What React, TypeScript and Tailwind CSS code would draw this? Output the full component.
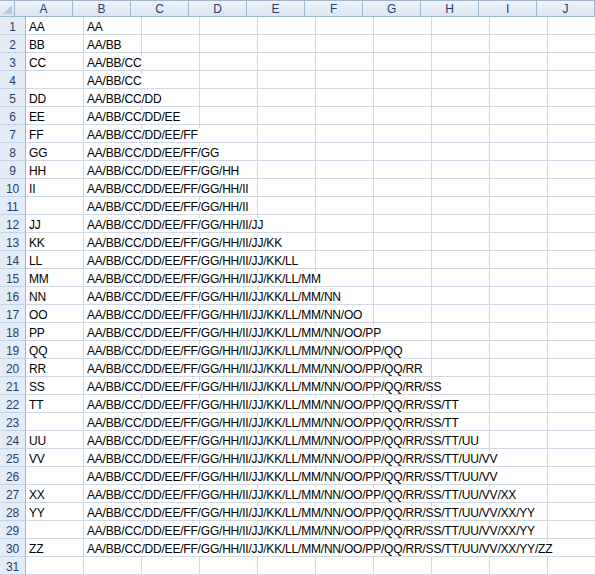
import React from "react";

const COLUMNS = ["A", "B", "C", "D", "E", "F", "G", "H", "I", "J"];

const COL_A = [
  "AA", "BB", "CC", "", "DD", "EE", "FF", "GG", "HH", "II",
  "", "JJ", "KK", "LL", "MM", "NN", "OO", "PP", "QQ", "RR",
  "SS", "TT", "", "UU", "VV", "", "XX", "YY", "", "ZZ",
];

// column B holds the running path of every code seen so far in column A
function buildRows() {
  const seen: string[] = [];
  const rows = COL_A.map((code) => {
    if (code) seen.push(code);
    return { a: code, b: seen.join("/") };
  });
  rows.push({ a: "", b: "" });
  return rows;
}

function CornerCell() {
  return (
    <div className="w-[26px] h-full border-r border-[#9eb6ce] flex items-end justify-end pr-[2px] pb-[2px]">
      <svg width="9" height="9" viewBox="0 0 9 9">
        <polygon points="9,0 9,9 0,9" fill="#b7c8dd" />
      </svg>
    </div>
  );
}

function Cell({ children, wide }: { children?: React.ReactNode; wide?: boolean }) {
  return (
    <div className="w-[58px] shrink-0 h-full border-r border-b border-[#d0d7e5] flex items-end pl-[3px]">
      {children ? (
        <span
          className={`relative z-10 bg-white whitespace-nowrap leading-[14px] h-[14px] ${
            wide ? "pr-[2px]" : ""
          }`}
        >
          {children}
        </span>
      ) : null}
    </div>
  );
}

export default function App() {
  const rows = buildRows();

  return (
    <div className="w-[595px] h-[575px] overflow-hidden bg-white font-['Liberation_Sans',Arial,sans-serif] text-[12px] tracking-[-0.2px] text-black">
      {/* column headers */}
      <div className="flex h-[17px] border-t border-b border-[#9eb6ce] bg-gradient-to-b from-[#eef3fa] to-[#dbe5f2]">
        <CornerCell />
        {COLUMNS.map((c) => (
          <div
            key={c}
            className="w-[58px] shrink-0 h-full border-r border-[#9eb6ce] flex items-center justify-center text-[#27416b] leading-none pt-[1px]"
          >
            {c}
          </div>
        ))}
      </div>

      {rows.map((row, i) => (
        <div key={i} className="flex h-[18px]">
          <div className="w-[26px] shrink-0 h-full bg-[#e4ecf7] border-r border-b border-r-[#9eb6ce] border-b-[#c5d3e6] flex items-end justify-center text-[#27416b] leading-[14px]">
            {i + 1}
          </div>
          <Cell>{row.a}</Cell>
          <Cell wide>{row.b}</Cell>
          {COLUMNS.slice(2).map((c) => (
            <Cell key={c} />
          ))}
        </div>
      ))}
    </div>
  );
}
